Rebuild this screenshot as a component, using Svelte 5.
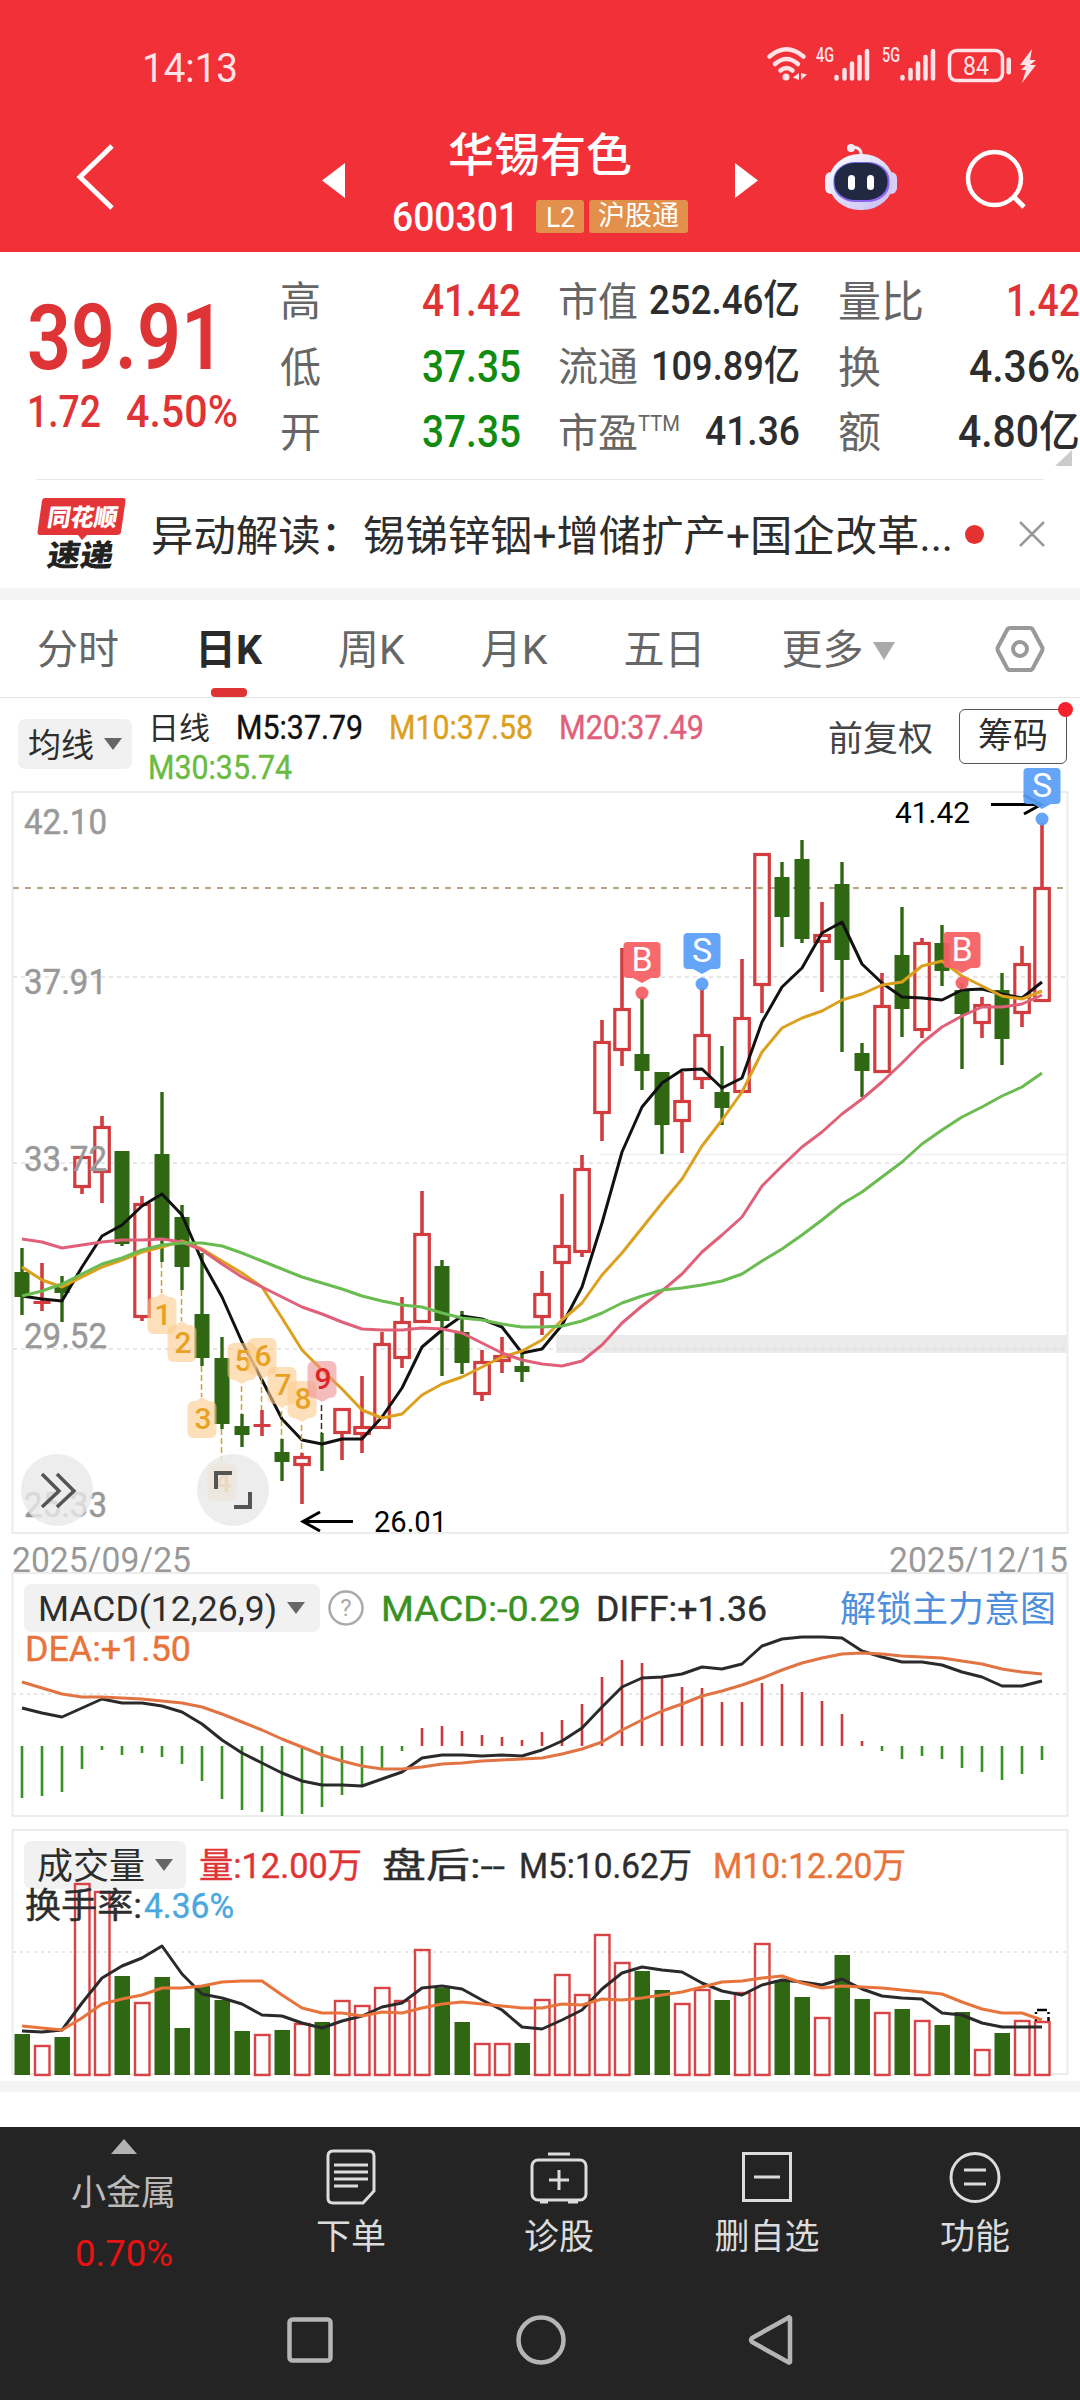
<script>
    const x = (i) => 22 + i * 20;

    // high, body top, body bottom, low, 1 = up
    const candles = [
        [1248, 1272, 1297, 1315, 0], [1263, 1301, 1304, 1311, 1], [1276, 1284, 1293, 1322, 0],
        [1156, 1156, 1188, 1194, 1], [1116, 1126, 1173, 1203, 1], [1151, 1151, 1244, 1246, 0],
        [1196, 1203, 1318, 1321, 1], [1092, 1154, 1240, 1262, 0], [1205, 1217, 1267, 1290, 0],
        [1253, 1314, 1358, 1366, 0], [1337, 1358, 1424, 1429, 0], [1414, 1426, 1435, 1447, 0],
        [1410, 1424, 1427, 1436, 1], [1439, 1452, 1462, 1481, 0], [1453, 1456, 1466, 1504, 1],
        [1433, 1443, 1444, 1471, 0], [1408, 1408, 1434, 1460, 1], [1376, 1426, 1435, 1453, 1],
        [1332, 1343, 1429, 1429, 1], [1297, 1321, 1359, 1368, 1], [1191, 1233, 1323, 1323, 1],
        [1260, 1266, 1321, 1376, 0], [1311, 1332, 1363, 1374, 0], [1350, 1361, 1395, 1401, 1],
        [1337, 1355, 1362, 1373, 1], [1353, 1366, 1372, 1382, 0], [1271, 1293, 1318, 1335, 1],
        [1194, 1245, 1264, 1319, 1], [1155, 1168, 1253, 1257, 1], [1020, 1041, 1114, 1141, 1],
        [948, 1008, 1051, 1066, 1], [997, 1054, 1071, 1090, 0], [1072, 1072, 1125, 1154, 0],
        [1072, 1100, 1122, 1153, 1], [988, 1034, 1080, 1089, 1], [1046, 1092, 1108, 1125, 0],
        [959, 1017, 1093, 1093, 1], [853, 853, 986, 1013, 1], [862, 877, 917, 947, 0],
        [840, 859, 939, 943, 0], [902, 934, 943, 992, 1], [862, 884, 960, 1052, 0],
        [1043, 1053, 1071, 1097, 0], [973, 1005, 1073, 1073, 1], [907, 955, 1009, 1037, 0],
        [938, 942, 1031, 1038, 1], [925, 943, 971, 986, 0], [983, 990, 1014, 1069, 0],
        [997, 1004, 1024, 1038, 1], [973, 990, 1039, 1065, 0], [946, 963, 1014, 1027, 1],
        [823, 887, 1002, 1002, 1],
    ];

    const ma5 = [1296, 1299, 1301, 1267, 1236, 1225, 1206, 1194, 1215, 1261, 1297, 1342, 1380, 1419, 1440, 1444, 1439, 1439, 1417, 1388, 1347, 1330, 1316, 1319, 1327, 1353, 1349, 1325, 1287, 1223, 1152, 1107, 1083, 1070, 1069, 1088, 1078, 1022, 987, 968, 933, 922, 964, 983, 997, 998, 1000, 990, 989, 994, 998, 982];
    const ma10 = [1267, 1280, 1287, 1277, 1267, 1260, 1252, 1247, 1241, 1249, 1261, 1273, 1287, 1318, 1350, 1370, 1389, 1410, 1418, 1414, 1395, 1384, 1377, 1367, 1357, 1351, 1340, 1320, 1303, 1275, 1253, 1228, 1203, 1179, 1146, 1120, 1092, 1052, 1028, 1018, 1011, 1000, 994, 985, 982, 966, 961, 976, 986, 996, 999, 991];
    const ma20 = [1239, 1242, 1248, 1245, 1242, 1240, 1240, 1239, 1242, 1250, 1264, 1277, 1287, 1297, 1307, 1314, 1322, 1329, 1330, 1330, 1328, 1329, 1333, 1343, 1353, 1360, 1364, 1366, 1361, 1345, 1323, 1306, 1291, 1274, 1252, 1235, 1217, 1186, 1166, 1147, 1132, 1114, 1099, 1082, 1063, 1043, 1027, 1016, 1007, 1007, 1004, 995];
    const ma30 = [1296, 1291, 1284, 1274, 1264, 1258, 1250, 1245, 1243, 1243, 1246, 1253, 1261, 1269, 1277, 1283, 1289, 1296, 1301, 1305, 1307, 1313, 1318, 1320, 1324, 1327, 1327, 1326, 1321, 1313, 1303, 1296, 1290, 1288, 1285, 1281, 1274, 1261, 1249, 1235, 1220, 1204, 1192, 1177, 1162, 1144, 1130, 1117, 1107, 1096, 1087, 1073];

    const macd = [1798, 1796, 1792, 1769, 1750, 1755, 1753, 1757, 1764, 1781, 1799, 1810, 1812, 1816, 1814, 1807, 1795, 1785, 1769, 1751, 1728, 1726, 1731, 1735, 1737, 1740, 1732, 1720, 1704, 1677, 1660, 1663, 1677, 1687, 1688, 1702, 1702, 1683, 1684, 1692, 1701, 1714, 1741, 1751, 1759, 1756, 1759, 1768, 1772, 1780, 1774, 1760];
    const diff = [1708, 1713, 1717, 1708, 1699, 1703, 1703, 1706, 1712, 1724, 1740, 1753, 1763, 1773, 1781, 1785, 1785, 1786, 1779, 1772, 1758, 1755, 1755, 1756, 1755, 1756, 1750, 1741, 1728, 1707, 1687, 1678, 1677, 1674, 1667, 1669, 1664, 1646, 1639, 1637, 1637, 1638, 1651, 1657, 1662, 1662, 1665, 1672, 1677, 1686, 1686, 1681];
    const dea = [1682, 1688, 1694, 1697, 1697, 1698, 1699, 1701, 1703, 1707, 1714, 1722, 1730, 1739, 1747, 1755, 1761, 1766, 1769, 1769, 1767, 1764, 1763, 1761, 1760, 1759, 1758, 1754, 1749, 1742, 1730, 1720, 1711, 1704, 1696, 1691, 1685, 1678, 1670, 1663, 1658, 1654, 1653, 1654, 1656, 1657, 1658, 1661, 1664, 1669, 1672, 1674];

    // negative = down day
    const volumes = [-2034, 2045, -2037, 1883, 1891, -1976, 2002, -1977, -2028, -1986, -2000, -2031, 2034, -2030, 2023, -2022, 2000, 2005, 1987, 2000, 1949, -1988, -2022, 2043, 2043, -2043, 1999, 1974, 1994, 1934, 1962, -1971, -1990, 2003, 1989, -2000, 1992, 1943, -1980, -1997, 2017, -1955, -1999, 2012, -2009, 2020, -2025, -2012, 2049, -2033, 2020, 2021];
    const vol5 = [2031, 2032, 2030, 2003, 1978, 1966, 1958, 1946, 1974, 1994, 1998, 2004, 2015, 2016, 2023, 2028, 2021, 2016, 2007, 2003, 1988, 1986, 1989, 2000, 2010, 2027, 2029, 2020, 2010, 1989, 1973, 1967, 1970, 1972, 1983, 1991, 1995, 1985, 1980, 1982, 1985, 1979, 1989, 1996, 1998, 1999, 2013, 2015, 2023, 2027, 2027, 2027];
    const vol10 = [2026, 2028, 2030, 2018, 2004, 1999, 1995, 1988, 1988, 1986, 1982, 1981, 1981, 1995, 2008, 2013, 2013, 2016, 2012, 2013, 2008, 2004, 2002, 2004, 2006, 2008, 2008, 2004, 2005, 1999, 2000, 1998, 1995, 1992, 1987, 1982, 1981, 1978, 1976, 1983, 1988, 1986, 1987, 1988, 1990, 1992, 1994, 2002, 2009, 2013, 2013, 2020];

    const line = (ys) => ys.map((y, i) => `${x(i)},${y}`).join(" ");

    const axis = [
        ["42.10", 834],
        ["37.91", 994],
        ["33.72", 1171],
        ["29.52", 1348],
        ["25.33", 1517],
    ];

    const trades = [
        { type: "B", x: 642, y: 942 },
        { type: "S", x: 702, y: 933 },
        { type: "B", x: 962, y: 932 },
        { type: "S", x: 1042, y: 768 },
    ];

    // n, x, box top, dashed from, dashed to, arrow side
    const counts = [
        [1, 162, 1297, 1262, 1293, "up"],
        [2, 182, 1325, 1290, 1321, "up"],
        [3, 202, 1401, 1366, 1397, "up"],
        [4, 222, 1464, 1429, 1460, "up"],
        [5, 242, 1343, 1386, 1414, "down"],
        [6, 262, 1338, 1378, 1410, "down"],
        [7, 282, 1367, 1411, 1439, "down"],
        [8, 302, 1381, 1425, 1453, "down"],
        [9, 322, 1361, 1405, 1433, "down"],
    ];
</script>

<!-- numerals are fitted to a fixed width, cap is the height of the digits -->
{#snippet num(text, w, cap, cls = "")}
    <svg class="num {cls}" width={w} height={cap}>
        <text y={cap} font-size={cap / 0.711} textLength={w} lengthAdjust="spacingAndGlyphs">{text}</text>
    </svg>
{/snippet}

{#snippet caret(w, h, cls = "")}
    <svg class="caret {cls}" width={w} height={h} viewBox="0 0 10 10" preserveAspectRatio="none">
        <path d="M0 0H10L5 10Z" />
    </svg>
{/snippet}

{#snippet signal(label)}
    {@render num(label, 18, 14, "net bold")}
    <svg class="signal" width="36" height="34" viewBox="0 0 36 34">
        <path d="M2.500 29V30.500M10.500 22V30.500M18 15.500V30.500M25.500 9V30.500M33 3V30.500" stroke="#ffe3e6" stroke-width="4.500" stroke-linecap="round" />
    </svg>
{/snippet}

<div class="page">
    <header>
        <div class="status">
            {@render num("14:13", 96, 29)}
            <div class="status-icons">
                <svg width="40" height="36" viewBox="0 0 40 36" fill="none" stroke="#ffe3e6" stroke-width="4.500" stroke-linecap="round">
                    <path d="M2.500 10.500Q19.500 -4 36.500 10.500M8 18Q19.500 8 31 18M13.500 24.500Q19.500 19.500 25.500 24.500" />
                    <circle cx="19" cy="31" r="3.500" fill="#ffe3e6" stroke="none" />
                    <path d="M32 27V34L26 31.500ZM34 27V34L40 28.500Z" fill="#ffe3e6" stroke="none" />
                </svg>
                <div class="sim first">{@render signal("4G")}</div>
                <div class="sim">{@render signal("5G")}</div>
                <svg class="battery" width="90" height="34" viewBox="0 0 90 34">
                    <rect x="1.500" y="2.500" width="53" height="30" rx="7" fill="none" stroke="#ffe3e6" stroke-width="3.500" />
                    <text x="15" y="27" font-size="25" textLength="26" lengthAdjust="spacingAndGlyphs" fill="#ffe3e6">84</text>
                    <rect x="58.500" y="9.500" width="4.500" height="17" rx="2" fill="#ffe3e6" />
                    <path d="M84 1L72 17H78L73 22H78L74 35L88 17H82L88 12H82Z" fill="#ffe3e6" />
                </svg>
            </div>
        </div>
        <div class="title-bar">
            <svg class="back" width="42" height="70" viewBox="0 0 42 70">
                <path d="M37 3L5 34L37 65" fill="none" stroke="#fff" stroke-width="5" />
            </svg>
            <svg class="prev" width="23" height="35"><path d="M23 0V35L0 17.500Z" fill="#fff" /></svg>
            <div class="stock">
                <h1>华锡有色</h1>
                <div class="code">
                    {@render num("600301", 127, 29, "bold")}
                    <span class="badge l2">{@render num("L2", 29, 20)}</span>
                    <span class="badge">沪股通</span>
                </div>
            </div>
            <svg class="next" width="23" height="35"><path d="M0 0V35L23 17.500Z" fill="#fff" /></svg>
            <svg class="robot" width="72" height="68" viewBox="0 0 72 68">
                <defs>
                    <linearGradient id="shell" x1="0" y1="0" x2="1" y2="1">
                        <stop offset="0" stop-color="#fff" />
                        <stop offset="1" stop-color="#c3bbf6" />
                    </linearGradient>
                    <linearGradient id="rim" x1="0" y1="0" x2="1" y2="1">
                        <stop offset="0" stop-color="#5e6fd8" />
                        <stop offset="1" stop-color="#9a5ff0" />
                    </linearGradient>
                </defs>
                <path d="M36 13Q37 4 27 4" fill="none" stroke="#f6ecf6" stroke-width="3" />
                <circle cx="26" cy="5" r="4" fill="#f6ecf6" />
                <rect x="0" y="29" width="12" height="22" rx="6" fill="#f1eefe" />
                <rect x="60" y="29" width="12" height="22" rx="6" fill="#d9d0fa" />
                <rect x="4" y="11" width="64" height="56" rx="31" ry="27" fill="url(#shell)" />
                <rect x="8.500" y="19" width="56" height="40" rx="22" ry="18" fill="url(#rim)" />
                <rect x="9.500" y="20" width="53" height="37" rx="21" ry="17" fill="#202842" />
                <rect x="23" y="32" width="7" height="15" rx="3.500" fill="#fff" />
                <rect x="42" y="32" width="7" height="15" rx="3.500" fill="#fff" />
            </svg>
            <svg class="search" width="62" height="62" viewBox="0 0 62 62" fill="none" stroke="#fff" stroke-width="4.500">
                <circle cx="28.500" cy="30.500" r="26.500" />
                <path d="M48 49L58 59" stroke-width="5" />
            </svg>
        </div>
    </header>

    <section class="quote">
        <div class="price red">
            {@render num("39.91", 198, 65, "heavy")}
            <div class="change">
                {@render num("1.72", 74, 31, "bold")}
                {@render num("4.50%", 112, 31, "bold")}
            </div>
        </div>
        <dl class="c1">
            <dt>高</dt><dd class="red">{@render num("41.42", 99, 31, "bold")}</dd>
            <dt>低</dt><dd class="green">{@render num("37.35", 99, 31, "bold")}</dd>
            <dt>开</dt><dd class="green">{@render num("37.35", 99, 31, "bold")}</dd>
        </dl>
        <dl class="c2">
            <dt>市值</dt><dd>{@render num("252.46亿", 151, 29, "bold")}</dd>
            <dt>流通</dt><dd>{@render num("109.89亿", 149, 29, "bold")}</dd>
            <dt>市盈<sup>{@render num("TTM", 42, 16)}</sup></dt><dd>{@render num("41.36", 95, 29, "bold")}</dd>
        </dl>
        <dl class="c3">
            <dt>量比</dt><dd class="red">{@render num("1.42", 74, 31, "bold")}</dd>
            <dt>换</dt><dd>{@render num("4.36%", 111, 31, "bold")}</dd>
            <dt>额</dt><dd>{@render num("4.80亿", 122, 31, "bold")}</dd>
        </dl>
        <svg class="corner" width="17" height="16"><path d="M17 0V16H0Z" fill="#ccc" /></svg>
    </section>

    <section class="news">
        <svg width="90" height="76" viewBox="0 0 90 76" class="news-logo">
            <path d="M8 2H86Q89 2 88.500 5L84 36Q83.500 39 80 39H50L45 44L41 39H3Q0 39 0.500 36L5 5Q5.500 2 8 2Z" fill="#e33438" />
            <g transform="skewX(-9)">
                <text x="14" y="30" font-size="24" textLength="70" lengthAdjust="spacingAndGlyphs" fill="#fff">同花顺</text>
                <text x="20" y="70" font-size="30" textLength="66" lengthAdjust="spacingAndGlyphs" fill="#222">速递</text>
            </g>
        </svg>
        <svg class="news-text" width="802" height="44">
            <text y="39" font-size="42" textLength="802" lengthAdjust="spacingAndGlyphs">异动解读：锡锑锌铟+增储扩产+国企改革...</text>
        </svg>
        <i class="dot"></i>
        <svg width="26" height="26" viewBox="0 0 26 26"><path d="M1 1L25 25M25 1L1 25" stroke="#999" stroke-width="2.500" /></svg>
    </section>

    <nav class="tabs">
        <span>分时</span>
        <span class="active">日K</span>
        <span>周K</span>
        <span>月K</span>
        <span>五日</span>
        <span>更多{@render caret(22, 18, "light")}</span>
        <svg width="48" height="46" viewBox="0 0 48 46" fill="none" stroke="#999">
            <path d="M14 2H34Q36 2 37 4L46 21Q47 23 46 25L37 42Q36 44 34 44H14Q12 44 11 42L2 25Q1 23 2 21L11 4Q12 2 14 2Z" stroke-width="4" />
            <circle cx="24" cy="23" r="7" stroke-width="4" />
        </svg>
    </nav>

    <section class="averages">
        <button class="pick"><span>均线</span>{@render caret(18, 12)}</button>
        <div class="legend">
            <span>日线</span>
            {@render num("M5:37.79", 127, 23, "medium black")}
            {@render num("M10:37.58", 144, 23, "medium ma10")}
            {@render num("M20:37.49", 145, 23, "medium ma20")}
            {@render num("M30:35.74", 144, 23, "medium ma30")}
        </div>
        <span class="adjust">前复权</span>
        <button class="chips"><span>筹码</span><i></i></button>
    </section>

    <svg class="chart" width="1080" height="743" viewBox="0 791 1080 743">
        <rect x="12.500" y="792" width="1055" height="741" fill="none" stroke="#ececec" stroke-width="2" />
        <rect x="556" y="1335" width="511" height="18" fill="#eaeaea" />
        <path d="M600 1154.500H1067" stroke="#eee" stroke-width="1.500" />
        <path d="M13 977H1067M13 1163H1067M13 1349H1067" stroke="#dedede" stroke-width="1.500" stroke-dasharray="4 4" />
        <path d="M13 888H1067" stroke="#b9a582" stroke-width="2" stroke-dasharray="6 6" />

        {#each candles as [high, top, bottom, low, up], i}
            {#if up}
                <path d="M{x(i)} {high}V{top}M{x(i)} {bottom}V{low}" stroke="#d23c3f" stroke-width="3.600" />
                {#if bottom - top < 5}
                    <rect x={x(i) - 8.5} y={top} width="17" height={bottom - top} fill="#d23c3f" />
                {:else}
                    <rect x={x(i) - 7.200} y={top + 1.500} width="14.500" height={bottom - top - 3} fill="none" stroke="#d23c3f" stroke-width="3.200" />
                {/if}
            {:else}
                <path d="M{x(i)} {high}V{low}" stroke="#2f6713" stroke-width="3.400" />
                <rect x={x(i) - 7.500} y={top} width="15" height={bottom - top} fill="#2f6713" />
            {/if}
        {/each}

        <g class="lines">
            <polyline points={line(ma5)} stroke="#111" />
            <polyline points={line(ma10)} stroke="#dca01e" />
            <polyline points={line(ma20)} stroke="#e0607a" />
            <polyline points={line(ma30)} stroke="#6abb50" />
        </g>

        {#each axis as [label, y]}
            <text class="axis" x="24" {y} textLength="83" lengthAdjust="spacingAndGlyphs">{label}</text>
        {/each}

        {#each counts as [n, cx, y, from, to, side]}
            <g class="count" class:nine={n === 9}>
                <path d="M{cx - 0.5} {from}V{to}" stroke={n === 9 ? "#333" : "#c9a437"} stroke-width="1.500" stroke-dasharray="6 3" />
                <rect x={cx - 14.500} {y} width="29" height="37" rx="6" />
                {#if side === "up"}
                    <path class="tip" d="M{cx - 6} {y}L{cx} {y - 4}L{cx + 6} {y}Z" />
                {:else}
                    <path class="tip" d="M{cx - 7} {y + 37}L{cx} {y + 41}L{cx + 7} {y + 37}Z" />
                {/if}
                <text x={cx + 1} y={y + 28} text-anchor="middle">{n}</text>
            </g>
        {/each}

        <g fill="none" stroke="#000" stroke-width="3">
            <path d="M353 1521.500H303M320 1512L303 1521.500L320 1531" />
            <path d="M991 804.500H1041M1024 795L1041 804.500L1024 814" />
        </g>
        <text class="extreme" x="374" y="1532" textLength="73" lengthAdjust="spacingAndGlyphs">26.01</text>
        <text class="extreme" x="895" y="823" textLength="75" lengthAdjust="spacingAndGlyphs">41.42</text>

        {#each trades as t}
            <g class="trade" class:sell={t.type === "S"}>
                <rect x={t.x - 18.500} y={t.y} width="37" height="36" rx="4" />
                <path d="M{t.x - 9} {t.y + 36}L{t.x} {t.y + 41}L{t.x + 9} {t.y + 36}Z" />
                <circle cx={t.x} cy={t.y + 51} r="6.500" />
                <text x={t.x} y={t.y + 29} text-anchor="middle">{t.type}</text>
            </g>
        {/each}

        <circle cx="57" cy="1490" r="36" fill="#e9e9e9" fill-opacity="0.800" />
        <circle cx="233" cy="1490" r="36" fill="#e9e9e9" fill-opacity="0.800" />
        <g fill="none" stroke="#555" stroke-width="3.500">
            <path d="M42 1474L59 1491L42 1507M57 1474L74 1491L57 1507" />
            <path d="M216 1489V1473H232M250 1492V1507H234" stroke-width="4" />
        </g>
    </svg>

    <div class="dates">
        {@render num("2025/09/25", 179, 25)}
        {@render num("2025/12/15", 179, 25)}
    </div>

    <section class="panel">
        <svg class="chart" width="1080" height="245" viewBox="0 1572 1080 245">
            <rect x="12.500" y="1573" width="1055" height="243" fill="none" stroke="#ececec" stroke-width="2" />
            <path d="M13 1694H1067" stroke="#dedede" stroke-width="1.500" stroke-dasharray="3 4" />
            {#each macd as y, i}
                <path d="M{x(i)} 1746V{y}" stroke={y < 1746 ? "#cc3a3d" : "#379222"} stroke-width="2.600" />
            {/each}
            <g class="lines">
                <polyline points={line(diff)} stroke="#2a2a2a" />
                <polyline points={line(dea)} stroke="#e27444" />
            </g>
        </svg>
        <div class="panel-head macd">
            <button class="pick">{@render num("MACD(12,26,9)", 239, 25)}{@render caret(18, 12)}</button>
            <svg class="help" width="36" height="36" viewBox="0 0 36 36">
                <circle cx="18" cy="18" r="16.500" fill="none" stroke="#aaa" stroke-width="2.500" />
                <text x="18" y="26" font-size="24" text-anchor="middle" fill="#aaa">?</text>
            </svg>
            {@render num("MACD:-0.29", 200, 25, "medium macd-value")}
            {@render num("DIFF:+1.36", 171, 25, "medium")}
            <a href="#unlock">解锁主力意图</a>
        </div>
        <div class="panel-sub">{@render num("DEA:+1.50", 166, 25, "medium orange")}</div>
    </section>

    <section class="panel volume">
        <svg class="chart" width="1080" height="247" viewBox="0 1829 1080 247">
            <rect x="12.500" y="1830" width="1055" height="244" fill="none" stroke="#ececec" stroke-width="2" />
            <path d="M13 1952H1067" stroke="#dedede" stroke-width="1.500" stroke-dasharray="3 4" />
        </svg>
        <div class="panel-head">
            <button class="pick"><span>成交量</span>{@render caret(18, 12)}</button>
            {@render num("量:12.00万", 163, 25, "medium red")}
            {@render num("盘后:--", 123, 25, "medium after")}
            {@render num("M5:10.62万", 173, 25, "medium m5")}
            {@render num("M10:12.20万", 193, 25, "medium orange m10")}
        </div>
        <svg class="chart bars" width="1080" height="247" viewBox="0 1829 1080 247">
            {#each volumes as v, i}
                {#if v > 0}
                    <rect x={x(i) - 7} y={v + 1} width="14.500" height={2074 - v} fill="none" stroke="#d94346" stroke-width="2.400" />
                {:else}
                    <rect x={x(i) - 7.500} y={-v} width="15.500" height={2075 + v} fill="#2f6713" />
                {/if}
            {/each}
            <path d="M1037 2010H1047M1036 2012V2014M1036 2017V2021M1048.500 2012V2014M1048.500 2017V2021" stroke="#000" stroke-width="2.500" />
            <g class="lines">
                <polyline points={line(vol5)} stroke="#2a2a2a" />
                <polyline points={line(vol10)} stroke="#e8743b" />
            </g>
        </svg>
        <div class="panel-sub">
            {@render num("换手率:", 117, 25, "medium")}{@render num("4.36%", 90, 25, "medium blue")}
        </div>
    </section>

    <div class="band"></div>

    <footer>
        <div class="actions">
            <div class="sector">
                <svg width="26" height="15"><path d="M13 0L26 15H0Z" fill="#b3b3b3" /></svg>
                <span>小金属</span>
                {@render num("0.70%", 98, 26, "pct")}
            </div>
            <div class="action">
                <svg width="60" height="58" viewBox="0 0 60 58">
                    <path d="M12 3H48Q53 3 53 8V43L42 55H12Q7 55 7 50V8Q7 3 12 3Z" />
                    <path d="M13 17H47M13 24H47M13 31H47M13 38H37" />
                </svg>
                <span>下单</span>
            </div>
            <div class="action">
                <svg width="60" height="58" viewBox="0 0 60 58">
                    <rect x="3" y="12" width="54" height="40" rx="6" />
                    <path d="M19 6H41M30 22V42M20 32H40M11 54H19M39 54H49" />
                </svg>
                <span>诊股</span>
            </div>
            <div class="action">
                <svg width="60" height="58" viewBox="0 0 60 58">
                    <path d="M6.500 5.500H53.500V52.500H6.500ZM17 29H43" />
                </svg>
                <span>删自选</span>
            </div>
            <div class="action">
                <svg width="60" height="58" viewBox="0 0 60 58">
                    <circle cx="30" cy="29.500" r="24" />
                    <path d="M19 22H41M19 36H41" />
                </svg>
                <span>功能</span>
            </div>
        </div>
        <div class="system">
            <svg width="50" height="52"><rect x="4.500" y="5.500" width="41" height="41" rx="3" /></svg>
            <svg width="50" height="52"><circle cx="25" cy="26" r="22.500" /></svg>
            <svg width="50" height="52"><path d="M43 4V48Q42 49 41 48L5 28Q3 26 5 24L41 4Q42 3 43 4Z" /></svg>
        </div>
    </footer>
</div>

<style>
    :global(body) {
        background: #fff;
    }

    .page {
        width: 1080px;
        height: 2400px;
        overflow: hidden;
        display: flex;
        flex-direction: column;
        font-family: Roboto, "Noto Sans CJK SC", sans-serif;
        color: #2d2d2d;
        line-height: 1;
        white-space: nowrap;
    }

    svg {
        display: block;
        flex: none;
        overflow: visible;
    }

    button {
        font: inherit;
        color: inherit;
        border: 0;
        padding: 0;
    }

    .num {
        fill: currentColor;
    }

    .bold {
        font-weight: 500;
    }

    .heavy {
        font-weight: 600;
    }

    /* between regular and medium */
    .medium {
        stroke: currentColor;
        stroke-width: 0.4;
    }

    .red {
        color: #df3436;
    }

    .green {
        color: #118c11;
    }

    .black {
        color: #111;
    }

    .ma10 {
        color: #dca01e;
    }

    .ma20 {
        color: #e0607a;
    }

    .ma30 {
        color: #6abb40;
    }

    .orange {
        color: #e8743b;
    }

    .blue {
        color: #4aa8dc;
    }

    .caret {
        fill: #666;
    }

    .caret.light {
        fill: #aaa;
    }

    header {
        height: 252px;
        flex: none;
        background: #f23038;
        color: #fff;
    }

    .status {
        height: 82px;
        padding: 0 42px 0 142px;
        display: flex;
        align-items: flex-end;
        justify-content: space-between;
        color: #ffe3e6;
    }

    .status-icons {
        display: flex;
        align-items: flex-end;
        height: 34px;
    }

    .sim {
        display: flex;
        align-items: flex-start;
        margin-left: 12px;
    }

    .sim.first {
        margin-left: 9px;
    }

    .battery {
        margin-left: 12px;
    }

    .title-bar {
        display: flex;
        align-items: flex-start;
        padding: 48px 0 0 75px;
    }

    .back {
        margin-top: 13px;
    }

    .prev {
        margin: 33px 0 0 205px;
    }

    .stock {
        width: 390px;
        display: flex;
        flex-direction: column;
        align-items: center;
    }

    h1 {
        margin: 2px 0 0;
        font-size: 46px;
        font-weight: 500;
    }

    .code {
        display: flex;
        align-items: center;
        margin-top: 22px;
        gap: 5px;
    }

    .badge {
        display: flex;
        align-items: center;
        justify-content: center;
        width: 99px;
        height: 33px;
        border-radius: 3px;
        background: #e2904c;
        font-size: 27px;
    }

    .badge.l2 {
        width: 48px;
        margin-left: 12px;
    }

    .next {
        margin-top: 33px;
    }

    .robot {
        margin: 13px 0 0 67px;
    }

    .search {
        margin: 18px 0 0 69px;
    }

    .quote {
        position: relative;
        height: 228px;
        flex: none;
        display: flex;
        padding-left: 27px;
    }

    .quote::after {
        content: "";
        position: absolute;
        left: 36px;
        right: 36px;
        bottom: 0;
        height: 1px;
        background: #e8e8e8;
    }

    .price {
        width: 253px;
        padding-top: 52px;
    }

    .change {
        display: flex;
        gap: 25px;
        margin-top: 27px;
    }

    dl {
        margin: 16px 0 0;
        display: grid;
        grid-template-columns: 84px 1fr;
        grid-auto-rows: 65.500px;
        align-items: center;
        align-content: start;
    }

    dt {
        display: flex;
        padding-top: 4px;
        font-size: 41px;
        color: #666;
    }

    dd {
        margin: 0;
        display: flex;
        justify-content: flex-end;
    }

    sup {
        display: block;
        margin-top: 1px;
    }

    .c1 {
        width: 241px;
    }

    .c2 {
        width: 242px;
        margin-left: 37px;
    }

    .c2 dd {
        padding-bottom: 2px;
    }

    .c2 dt {
        font-size: 40px;
    }

    .c3 {
        width: 242px;
        margin-left: 38px;
    }

    .c3 dt {
        font-size: 43px;
    }

    .corner {
        position: absolute;
        right: 8px;
        bottom: 14px;
    }

    .news {
        height: 108px;
        flex: none;
        display: flex;
        align-items: center;
        padding-left: 37px;
        border-bottom: 12px solid #f4f4f4;
    }

    .news-logo {
        font-weight: 900;
    }

    .news-text {
        margin-left: 24px;
        fill: #2d2d2d;
    }

    .dot {
        width: 19px;
        height: 19px;
        margin: 0 35px 0 12px;
        border-radius: 50%;
        background: #e33230;
    }

    .tabs {
        height: 97px;
        flex: none;
        display: flex;
        align-items: center;
        padding-left: 37px;
        font-size: 41px;
        color: #666;
        border-bottom: 1px solid #e2e6e6;
    }

    .tabs span {
        display: flex;
        align-items: center;
        height: 93px;
        padding-top: 4px;
        margin-right: 76px;
    }

    .tabs span:last-of-type {
        margin-right: 101px;
        gap: 9px;
    }

    .tabs .active {
        position: relative;
        font-weight: 700;
        color: #2a2a2a;
    }

    .tabs .active::after {
        content: "";
        position: absolute;
        left: 50%;
        bottom: 0;
        width: 36px;
        height: 9px;
        margin-left: -18px;
        border-radius: 4px;
        background: #df3436;
    }

    .averages {
        height: 93px;
        flex: none;
        display: flex;
        align-items: flex-start;
        padding-left: 18px;
    }

    .pick {
        display: flex;
        align-items: center;
        justify-content: center;
        gap: 10px;
        border-radius: 7px;
        background: #f1f1f1;
        font-size: 33px;
    }

    .pick span,
    .chips span {
        padding-top: 3px;
    }

    .averages .pick {
        width: 114px;
        height: 50px;
        margin-top: 21px;
    }

    .legend {
        display: flex;
        flex-wrap: wrap;
        align-items: center;
        width: 600px;
        margin: 13px 0 0 16px;
        font-size: 31px;
        row-gap: 12px;
        column-gap: 26px;
    }

    .legend span {
        padding-top: 2px;
    }

    .adjust {
        margin: 24px 26px 0 80px;
        font-size: 35px;
        color: #444;
    }

    .chips {
        position: relative;
        width: 108px;
        height: 55px;
        margin-top: 11px;
        border: 1.500px solid #555;
        border-radius: 6px;
        background: none;
        font-size: 35px;
    }

    .chips i {
        position: absolute;
        top: -8px;
        right: -7px;
        width: 15px;
        height: 15px;
        border-radius: 50%;
        background: #f5222d;
    }

    .chart {
        position: relative;
    }

    .lines polyline {
        fill: none;
        stroke-width: 3;
        stroke-linejoin: round;
    }

    .axis {
        font-size: 35px;
        fill: #999;
        stroke: #999;
        stroke-width: 0.5;
    }

    .extreme {
        font-size: 30px;
    }

    .count rect,
    .count .tip {
        fill: #fbcb8c;
        fill-opacity: 0.6;
    }

    .count text {
        font-size: 30px;
        font-weight: 500;
        fill: #e9a123;
    }

    .nine rect,
    .nine .tip {
        fill: #ee8f92;
    }

    .nine text {
        fill: #dc2626;
    }

    .trade {
        fill: #f65f63;
        opacity: 0.93;
    }

    .trade.sell {
        fill: #5a9ff8;
    }

    .trade text {
        fill: #fff;
        font-size: 34px;
    }

    .dates {
        height: 38px;
        flex: none;
        display: flex;
        align-items: flex-end;
        justify-content: space-between;
        padding: 0 12px;
        color: #999;
    }

    .panel {
        position: relative;
        height: 245px;
        flex: none;
        margin-bottom: 12px;
    }

    .volume {
        height: 247px;
        margin-bottom: 5px;
    }

    .panel-head {
        position: absolute;
        left: 24px;
        top: 12px;
        right: 24px;
        height: 48px;
        display: flex;
        align-items: center;
    }

    .panel-sub {
        position: absolute;
        left: 25px;
        top: 64px;
        display: flex;
        gap: 2px;
    }

    .volume .bars {
        position: absolute;
        top: 0;
        left: 0;
    }

    .macd .pick {
        width: 296px;
        height: 48px;
        padding-right: 2px;
    }

    .help {
        margin: 0 17px 0 8px;
    }

    .macd-value {
        color: #379222;
        margin-right: 15px;
    }

    .panel-head a {
        margin-left: auto;
        padding-top: 3px;
        font-size: 36px;
        color: #4d8fdc;
        text-decoration: none;
    }

    .volume .pick {
        width: 162px;
        height: 48px;
        font-size: 36px;
        margin-right: 13px;
    }

    .after {
        margin-left: 20px;
    }

    .m5 {
        margin-left: 14px;
    }

    .m10 {
        margin-left: 21px;
    }

    .band {
        height: 11px;
        flex: none;
        background: #f4f4f4;
        margin-bottom: 35px;
    }

    footer {
        flex: 1;
        background: #242424;
    }

    .actions {
        display: flex;
        height: 187px;
        color: #dcdcdc;
        font-size: 35px;
    }

    .sector {
        width: 247px;
        display: flex;
        flex-direction: column;
        align-items: center;
        padding-top: 12px;
        color: #bbb;
    }

    .sector span {
        margin: 22px 0 29px;
    }

    .pct {
        color: #e81212;
    }

    .action {
        width: 208px;
        display: flex;
        flex-direction: column;
        align-items: center;
        gap: 14px;
        padding-top: 21px;
    }

    .action svg {
        fill: none;
        stroke: #dcdcdc;
        stroke-width: 3;
    }

    .system {
        display: flex;
        gap: 181px;
        padding-left: 285px;
    }

    .system svg {
        fill: none;
        stroke: #b5b5b5;
        stroke-width: 4.5;
    }
</style>
